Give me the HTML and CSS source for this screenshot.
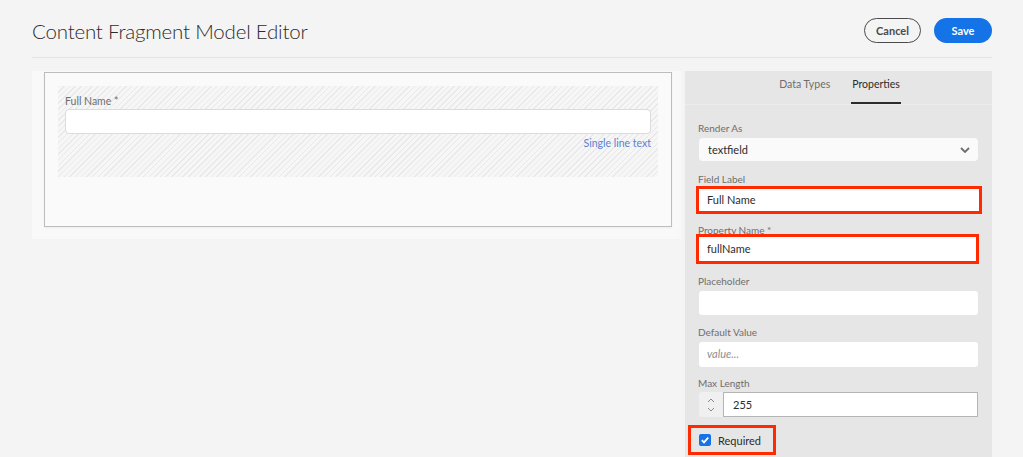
FILE: index.html
```html
<!DOCTYPE html>
<html>
<head>
<meta charset="utf-8">
<link rel="stylesheet" href="styles.css">
</head>
<body>
<header class="topbar">
  <h1 class="title">Content Fragment Model Editor</h1>
  <div class="actions">
    <button class="btn btn-cancel">Cancel</button>
    <button class="btn btn-save">Save</button>
  </div>
</header>
<main class="workspace">
  <section class="canvas">
    <div class="model-box">
      <div class="field-drop">
        <div class="drop-label">Full Name *</div>
        <div class="drop-input"></div>
        <div class="drop-type">Single line text</div>
      </div>
    </div>
  </section>
  <aside class="panel">
    <nav class="tabs">
      <span class="tab">Data Types</span>
      <span class="tab tab-active">Properties</span>
    </nav>
    <div class="form">
      <div class="group">
        <label class="lbl">Render As</label>
        <div class="select"><span>textfield</span>
          <svg class="chev" width="10" height="6" viewBox="0 0 10 6"><path d="M1 1l4 4 4-4" fill="none" stroke="#6e6e6e" stroke-width="1.8"/></svg>
        </div>
      </div>
      <div class="group">
        <label class="lbl">Field Label</label>
        <div class="input marked">Full Name</div>
      </div>
      <div class="group">
        <label class="lbl lbl-tight">Property Name *</label>
        <div class="input marked marked-2">fullName</div>
      </div>
      <div class="group">
        <label class="lbl">Placeholder</label>
        <div class="input"></div>
      </div>
      <div class="group">
        <label class="lbl">Default Value</label>
        <div class="input placeholder">value...</div>
      </div>
      <div class="group group-last">
        <label class="lbl lbl-tight2">Max Length</label>
        <div class="number">
          <div class="stepper">
            <svg width="8" height="16" viewBox="0 0 8 16"><path d="M1 5l3-3 3 3M1 11l3 3 3-3" fill="none" stroke="#8a8a8a" stroke-width="1"/></svg>
          </div>
          <div class="num-input">255</div>
        </div>
      </div>
      <div class="check-row">
        <span class="checkbox">
          <svg width="12" height="12" viewBox="0 0 12 12"><rect width="12" height="12" rx="2" fill="#1473e6"/><path d="M2.8 6.2l2.2 2.2 4.2-4.8" fill="none" stroke="#fff" stroke-width="1.8"/></svg>
        </span>
        <span class="check-text">Required</span>
      </div>
    </div>
  </aside>
</main>
</body>
</html>
```
FILE: styles.css
```css
* { box-sizing: border-box; }
html, body { margin: 0; padding: 0; }
body {
  background: #f4f4f4;
  font-family: "Lato", "Open Sans", sans-serif;
  color: #2c2c2c;
  width: 1023px;
  height: 457px;
  overflow: hidden;
}
.topbar {
  margin: 0 31px 0 32px;
  height: 58px;
  border-bottom: 1px solid #e4e4e4;
  display: flex;
  align-items: flex-start;
  justify-content: space-between;
}
.title {
  margin: 19px 0 0 0;
  font-size: 20.5px;
  line-height: 25px;
  font-weight: 300;
  color: #2c2c2c;
  letter-spacing: -0.2px;
}
.actions { display: flex; gap: 13px; margin-top: 18px; }
.btn {
  height: 25px;
  border-radius: 13px;
  font-family: "Lato", sans-serif;
  font-weight: 700;
  font-size: 11px;
  padding: 0;
  cursor: pointer;
}
.btn-cancel {
  width: 57px;
  background: transparent;
  border: 1.5px solid #4b4b4b;
  color: #4b4b4b;
}
.btn-save {
  width: 58px;
  background: #1473e6;
  border: none;
  color: #fff;
}
.workspace {
  display: flex;
  margin: 13px 31px 0 32px;
  align-items: flex-start;
}
.canvas {
  width: 653px;
  height: 168px;
  background: #f9f9f9;
  padding: 1px 13px 0 12px;
  box-shadow: inset -8px 0 8px -8px rgba(0,0,0,0.06);
}
.model-box {
  height: 155px;
  border: 1px solid #bdbdbd;
  background: #fafafa;
  padding: 13px 13px 0 13px;
  box-shadow: 0 1px 2px rgba(0,0,0,0.05);
}
.field-drop {
  height: 91px;
  background-color: #f6f6f6;
  background-image: repeating-linear-gradient(135deg, #e9e9e9 0 1px, transparent 1px 4px);
  padding: 8px 7px 0 7px;
}
.drop-label {
  font-size: 10.5px;
  line-height: 14px;
  color: #6e6e6e;
  margin-bottom: 1px;
}
.drop-input {
  height: 25px;
  background: #fff;
  border: 1px solid #dcdcdc;
  border-radius: 4px;
}
.drop-type {
  text-align: right;
  font-size: 10.5px;
  line-height: 18px;
  color: #5a82d2;
}
.panel {
  width: 307px;
  height: 386px;
  background: #e6e6e6;
}
.tabs {
  height: 34px;
  border-bottom: 1px solid #ececec;
  display: flex;
  justify-content: center;
  gap: 21px;
  padding-left: 3px;
}
.tab {
  font-size: 10.5px;
  line-height: 27px;
  color: #6e6e6e;
  height: 33px;
}
.tab-active {
  color: #2c2c2c;
  border-bottom: 2.5px solid #2c2c2c;
  padding: 0 1px;
}
.form {
  padding: 17px 14px 0 13px;
  display: flex;
  flex-direction: column;
}
.group {
  display: flex;
  flex-direction: column;
  height: 51px;
  flex-shrink: 0;
}
.lbl {
  font-size: 10px;
  line-height: 12px;
  height: 12px;
  color: #6e6e6e;
  margin-bottom: 4px;
}
.lbl-tight { margin-bottom: 1px; }
.lbl-tight2 { margin-bottom: 3px; }
.select {
  height: 23px;
  background: #fafafa;
  border-radius: 4px;
  margin-left: 1px;
  display: flex;
  align-items: center;
  justify-content: space-between;
  padding: 0 8px 0 9px;
  font-size: 11px;
  color: #2c2c2c;
}
.chev { margin-top: 1px; }
.input {
  height: 24px;
  background: #fff;
  border-radius: 3px;
  margin-left: 1px;
  padding: 0 8px;
  font-size: 11px;
  line-height: 24px;
  color: #2c2c2c;
}
.marked {
  height: 22px;
  line-height: 22px;
  border-radius: 0;
  outline: 3px solid #ff2a00;
  margin-right: -1px;
}
.marked-2 { margin-right: 2px; height: 24px; line-height: 24px; }
.placeholder { color: #8e8e8e; font-style: italic; height: 25px; }
.group-last { height: 48px; }
.number { display: flex; height: 25px; margin-left: 1px; }
.stepper {
  width: 24px;
  background: #f0f0f0;
  display: flex;
  align-items: center;
  justify-content: center;
  border-radius: 3px 0 0 3px;
}
.num-input {
  flex: 1;
  background: #fff;
  border: 1px solid #b5b5b5;
  font-size: 11px;
  line-height: 23px;
  padding: 0 9px;
  color: #2c2c2c;
}
.check-row {
  margin-left: -10px;
  width: 88px;
  height: 30px;
  flex-shrink: 0;
  border: 3px solid #ff2a00;
  display: flex;
  align-items: center;
  padding-left: 8px;
  gap: 7px;
}
.checkbox { display: flex; }
.check-text { font-size: 11px; color: #2c2c2c; }
```
